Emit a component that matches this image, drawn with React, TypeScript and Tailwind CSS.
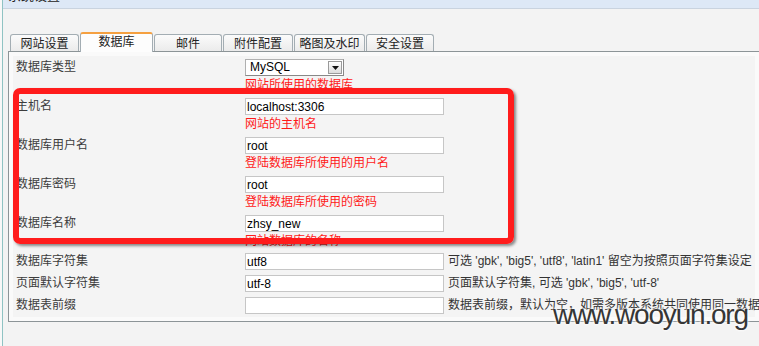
import React from 'react';

const tabs = [
  { name: '网站设置', w: 'w-[69px]' },
  { name: '数据库', w: 'w-[73px]', active: true },
  { name: '邮件', w: 'w-[68px]' },
  { name: '附件配置', w: 'w-[70px]' },
  { name: '略图及水印', w: 'w-[71px]' },
  { name: '安全设置', w: 'w-[68px]' },
];

const dbRows = [
  { label: '主机名', value: 'localhost:3306', hint: '网站的主机名' },
  { label: '数据库用户名', value: 'root', hint: '登陆数据库所使用的用户名' },
  { label: '数据库密码', value: 'root', hint: '登陆数据库所使用的密码' },
  { label: '数据库名称', value: 'zhsy_new', hint: '网站数据库的名称' },
];

const charsetRows = [
  { label: '数据库字符集', value: 'utf8', note: "可选 'gbk', 'big5', 'utf8', 'latin1' 留空为按照页面字符集设定" },
  { label: '页面默认字符集', value: 'utf-8', note: "页面默认字符集, 可选 'gbk', 'big5', 'utf-8'" },
  { label: '数据表前缀', value: '', note: '数据表前缀，默认为空，如需多版本系统共同使用同一数据库，请设置不同的前缀' },
];

function TextBox({ value }: { value: string }) {
  return (
    <input
      readOnly
      defaultValue={value}
      className="w-[199px] h-[17px] shrink-0 border border-[#c6c6c6] bg-white px-[1px] text-[12px] leading-[15px] text-black outline-none"
    />
  );
}

export default function App() {
  return (
    <div className="relative w-[759px] h-[346px] overflow-hidden flex bg-[#f3f3f3] text-[12px] text-[#3c3c3c] font-['Liberation_Sans','Noto_Sans_CJK_SC',sans-serif]">
      {/* left frame edge */}
      <div className="w-[2px] shrink-0 bg-[#f8f8f8]" />
      <div className="w-[1px] shrink-0 bg-[#8fc3c3]" />

      <div className="flex-1 min-w-0 flex flex-col">
        {/* header bar, mostly scrolled out */}
        <div className="h-[9px] shrink-0 overflow-hidden bg-[#dde8f6] border-b border-[#c9d3df] pl-[5px]">
          <div className="-mt-[12px] text-[13px] leading-[16px] text-[#222]">系统设置</div>
        </div>

        {/* tabs */}
        <div className="h-[43px] shrink-0 ml-[5px] pl-[2px] flex items-end border-b border-[#8c9497]">
          {tabs.map((t) =>
            t.active ? (
              <div
                key={t.name}
                className={`${t.w} h-[20px] -mb-[1px] ml-[1px] flex items-center justify-center border-x border-t-2 border-x-[#a3adb3] border-t-[#f5a040] rounded-t-[3px] bg-[#fdfdfd] text-[12px] text-[#222] pb-[3px]`}
              >
                {t.name}
              </div>
            ) : (
              <div
                key={t.name}
                className={`${t.w} h-[17px] ml-[1px] first:ml-0 flex items-center justify-center border border-b-0 border-[#a3adb3] rounded-t-[3px] bg-gradient-to-b from-[#fbfbfb] to-[#ebebeb] text-[12px] text-[#222] pt-[2px]`}
              >
                {t.name}
              </div>
            )
          )}
        </div>

        {/* panel */}
        <div className="ml-[5px] border-l border-b border-[#8c9497] bg-[#fafafa] p-[4px]">
          <div className="bg-[#f4f4f4]">
            {/* database type */}
            <div className="flex pt-[3px] pb-[2px]">
              <div className="w-[232px] shrink-0 pl-[3px] leading-[17px]">数据库类型</div>
              <div className="flex flex-col">
                <div className="w-[99px] h-[17px] flex items-center border border-[#b0b0b0] border-r-[#888] border-b-[#888] bg-white">
                  <span className="flex-1 pl-[4px] text-[12px] leading-[15px] text-black">MySQL</span>
                  <span className="w-[14px] h-[13px] mr-[1px] flex items-center justify-center border border-[#9a9a9a] bg-gradient-to-b from-[#ffffff] to-[#dcdcdc]">
                    <svg width="7" height="4" viewBox="0 0 7 4">
                      <path d="M0 0h7L3.5 4z" fill="#111" />
                    </svg>
                  </span>
                </div>
                <div className="mt-[1px] leading-[16px] text-[#ff1a1a]">网站所使用的数据库</div>
              </div>
            </div>

            {dbRows.map((r) => (
              <div key={r.label} className="flex pt-[3px] pb-[2px]">
                <div className="w-[232px] shrink-0 pl-[3px] leading-[17px]">{r.label}</div>
                <div className="flex flex-col">
                  <TextBox value={r.value} />
                  <div className="mt-[1px] leading-[16px] text-[#ff1a1a]">{r.hint}</div>
                </div>
              </div>
            ))}

            {charsetRows.map((r) => (
              <div key={r.label} className="flex pt-[2px] pb-[3px]">
                <div className="w-[232px] shrink-0 pl-[3px] leading-[17px]">{r.label}</div>
                <TextBox value={r.value} />
                <div className="ml-[4px] leading-[17px] whitespace-nowrap text-[#333]">{r.note}</div>
              </div>
            ))}
          </div>
        </div>
      </div>

      {/* red highlight box drawn over the form */}
      <div className="absolute left-[13px] top-[88px] w-[501px] h-[156px] border-[6px] border-[#ff1c1c] rounded-[7px] shadow-[2px_2px_3px_rgba(0,0,0,0.45)] pointer-events-none" />

      {/* watermark */}
      <div className="absolute left-[553px] top-[301px] text-[28px] leading-[28px] tracking-[-1.2px] text-[#363636] [text-shadow:0_0_3px_#fff,0_0_3px_#fff] font-['Liberation_Sans',sans-serif]">
        www.wooyun.org
      </div>
    </div>
  );
}
